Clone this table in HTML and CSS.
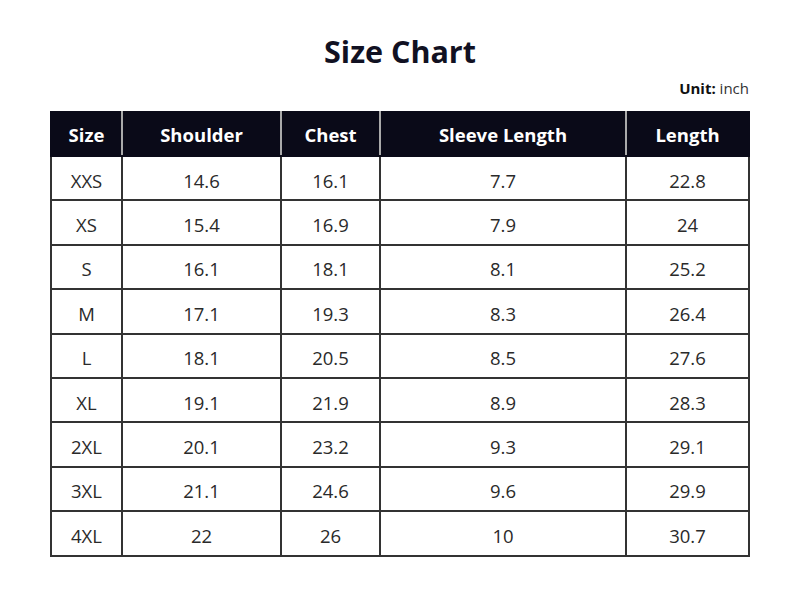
FILE: index.html
```html
<!DOCTYPE html>
<html>
<head>
<meta charset="utf-8">
<link rel="stylesheet" href="styles.css">
</head>
<body>
<div class="wrap">
  <h1 class="title">Size Chart</h1>
  <div class="unit"><b>Unit:</b> inch</div>
  <table class="chart">
    <colgroup>
      <col class="c1"><col class="c2"><col class="c3"><col class="c4"><col class="c5">
    </colgroup>
    <thead>
      <tr><th>Size</th><th>Shoulder</th><th>Chest</th><th>Sleeve Length</th><th>Length</th></tr>
    </thead>
    <tbody>
      <tr><td>XXS</td><td>14.6</td><td>16.1</td><td>7.7</td><td>22.8</td></tr>
      <tr><td>XS</td><td>15.4</td><td>16.9</td><td>7.9</td><td>24</td></tr>
      <tr><td>S</td><td>16.1</td><td>18.1</td><td>8.1</td><td>25.2</td></tr>
      <tr><td>M</td><td>17.1</td><td>19.3</td><td>8.3</td><td>26.4</td></tr>
      <tr><td>L</td><td>18.1</td><td>20.5</td><td>8.5</td><td>27.6</td></tr>
      <tr><td>XL</td><td>19.1</td><td>21.9</td><td>8.9</td><td>28.3</td></tr>
      <tr><td>2XL</td><td>20.1</td><td>23.2</td><td>9.3</td><td>29.1</td></tr>
      <tr><td>3XL</td><td>21.1</td><td>24.6</td><td>9.6</td><td>29.9</td></tr>
      <tr><td>4XL</td><td>22</td><td>26</td><td>10</td><td>30.7</td></tr>
    </tbody>
  </table>
</div>
</body>
</html>
```
FILE: styles.css
```css
html, body { margin: 0; padding: 0; background: #fff; }
body { font-family: "Open Sans", "Noto Sans", sans-serif; color: #222; }
.wrap { width: 700px; margin: 0 auto; padding-top: 30px; }
.title { margin: 0; text-align: center; font-size: 30.5px; font-weight: 700; color: #111122; line-height: 42px; }
.unit { text-align: right; font-size: 15px; color: #333; line-height: 20px; margin-top: 6px; margin-bottom: 13px; padding-right: 1px; }
.unit b { color: #111; }
.chart { width: 698px; border-collapse: collapse; table-layout: fixed; }
.c1 { width: 71px; } .c2 { width: 159px; } .c3 { width: 99px; } .c4 { width: 246px; } .c5 { width: 123px; }
.chart th { background: #0a0a18; color: #fff; font-size: 18.5px; font-weight: 700; height: 42px; padding: 0; border: 2px solid #0a0a18; border-left-color: #aaa; border-right-color: #aaa; }
.chart th:first-child { border-left-color: #0a0a18; }
.chart th:last-child { border-right-color: #0a0a18; }
.chart td { text-align: center; font-size: 18.5px; height: 44.4px; padding: 4px 0 0; box-sizing: border-box; border: 2px solid #333; color: #2a2a2a; }
```
